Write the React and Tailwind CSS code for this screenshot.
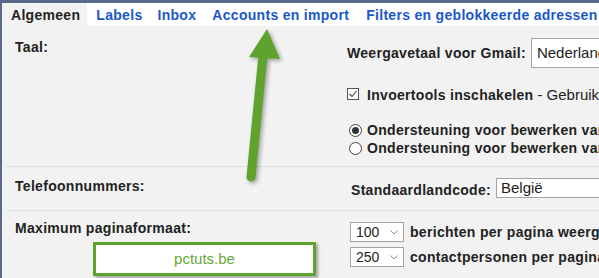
import React from "react";

function Select({ value, width, height = 20 }) {
  return (
    <div
      className="flex items-center justify-between border border-[#a3a3a3] bg-white pl-[5px] pr-[5px] font-normal text-[#222]"
      style={{ width, height }}
    >
      <span>{value}</span>
      <svg width="8" height="5" viewBox="0 0 8 5" className="shrink-0">
        <polyline points="0.5,0.5 4,4 7.5,0.5" fill="none" stroke="#8a8a8a" strokeWidth="1" />
      </svg>
    </div>
  );
}

function Radio({ checked }) {
  return (
    <svg width="13" height="13" viewBox="0 0 13 13" className="shrink-0">
      <circle cx="6.5" cy="6.5" r="6" fill="#fff" stroke="#444" strokeWidth="1" />
      {checked && <circle cx="6.5" cy="6.5" r="3.5" fill="#333" />}
    </svg>
  );
}

export default function App() {
  return (
    <div className="relative h-[278px] w-[599px] overflow-hidden bg-[#5b6a8b] pl-[2px] pt-[3px] font-['Liberation_Sans',Arial,sans-serif] text-[14px] leading-[16px] text-[#222]">
      <div className="h-full whitespace-nowrap bg-[#f2f2f2]">
        {/* tabs */}
        <div className="flex h-[23px] items-center bg-white font-bold tracking-[0.3px] text-[#1c58c9]">
          <div className="flex h-full items-center bg-[#f2f2f2] pl-[9px] pr-[7px] text-[#222]">Algemeen</div>
          <span className="ml-[9px]">Labels</span>
          <span className="ml-[15px]">Inbox</span>
          <span className="ml-[16px]">Accounts en import</span>
          <span className="ml-[17px]">Filters en geblokkeerde adressen</span>
        </div>

        {/* Taal */}
        <div className="flex h-[140px]">
          <div className="w-[345px] shrink-0 pl-[13px] pt-[13px] font-bold tracking-[0.3px]">Taal:</div>
          <div className="pt-[12px]">
            <div className="flex h-[30px] items-center">
              <span className="font-bold tracking-[0.3px]">Weergavetaal voor Gmail:</span>
              <div className="ml-[5px] flex h-[30px] w-[200px] items-center border border-[#a3a3a3] bg-white pl-[5px] text-[15px]">
                Nederlands
              </div>
            </div>
            <div className="mt-[19px] flex h-[16px] items-center">
              <svg width="12" height="12" viewBox="0 0 12 12" className="mt-[-3px] shrink-0">
                <rect x="0.5" y="0.5" width="11" height="11" fill="#fff" stroke="#555" />
                <polyline points="2.5,6 5,8.5 9.5,3" fill="none" stroke="#444" strokeWidth="1.1" />
              </svg>
              <span className="ml-[8px] font-bold tracking-[0.3px]">Invoertools inschakelen</span>
              <span className="ml-[4px] text-[15px]">- Gebruik verschillende tekstinvoertools</span>
            </div>
            <div className="mt-[18px] flex h-[18px] items-center pl-[2px]">
              <Radio checked />
              <span className="ml-[5px] font-bold tracking-[0.3px]">Ondersteuning voor bewerken van tekst van rechts naar links uitschakelen</span>
            </div>
            <div className="flex h-[18px] items-center pl-[2px]">
              <Radio />
              <span className="ml-[5px] font-bold tracking-[0.3px]">Ondersteuning voor bewerken van tekst van rechts naar links inschakelen</span>
            </div>
          </div>
        </div>
        <div className="ml-[4px] h-px bg-[#dedede]" />

        {/* Telefoonnummers */}
        <div className="flex h-[43px]">
          <div className="w-[345px] shrink-0 pl-[13px] pt-[11px] font-bold tracking-[0.3px]">Telefoonnummers:</div>
          <div className="flex items-center self-start pt-[11px] pl-[4px]">
            <span className="mt-[3px] font-bold tracking-[0.3px]">Standaardlandcode:</span>
            <div className="ml-[5px] flex h-[20px] w-[200px] items-center border border-[#a3a3a3] bg-white pl-[4px] text-[15px]">
              België
            </div>
          </div>
        </div>
        <div className="ml-[4px] h-px bg-[#dedede]" />

        {/* Maximum paginaformaat */}
        <div className="flex">
          <div className="w-[345px] shrink-0 pl-[13px] pt-[9px] font-bold tracking-[0.3px]">Maximum paginaformaat:</div>
          <div className="pl-[3px] pt-[11px]">
            <div className="flex items-center">
              <Select value="100" width={54} />
              <span className="ml-[6px] font-bold tracking-[0.3px]">berichten per pagina weergeven</span>
            </div>
            <div className="mt-[5px] flex items-center">
              <Select value="250" width={54} />
              <span className="ml-[6px] font-bold tracking-[0.3px]">contactpersonen per pagina weergeven</span>
            </div>
          </div>
        </div>
      </div>

      {/* annotation arrow */}
      <svg
        className="pointer-events-none absolute left-0 top-0"
        width="599"
        height="278"
        viewBox="0 0 599 278"
        style={{ filter: "drop-shadow(2px 2px 2px rgba(0,0,0,0.35))" }}
      >
        <line x1="251" y1="177" x2="263" y2="55" stroke="#5fa32e" strokeWidth="9" strokeLinecap="round" />
        <polygon points="267,29 249,57 280,59" fill="#5fa32e" />
      </svg>

      {/* watermark */}
      <div className="absolute left-[93px] top-[242px] flex h-[34px] w-[223px] items-center justify-center border-[3px] border-[#5fa32e] bg-white text-[15px] text-[#66a93a] shadow-[2px_2px_3px_rgba(0,0,0,0.35)]">
        pctuts.be
      </div>
    </div>
  );
}
